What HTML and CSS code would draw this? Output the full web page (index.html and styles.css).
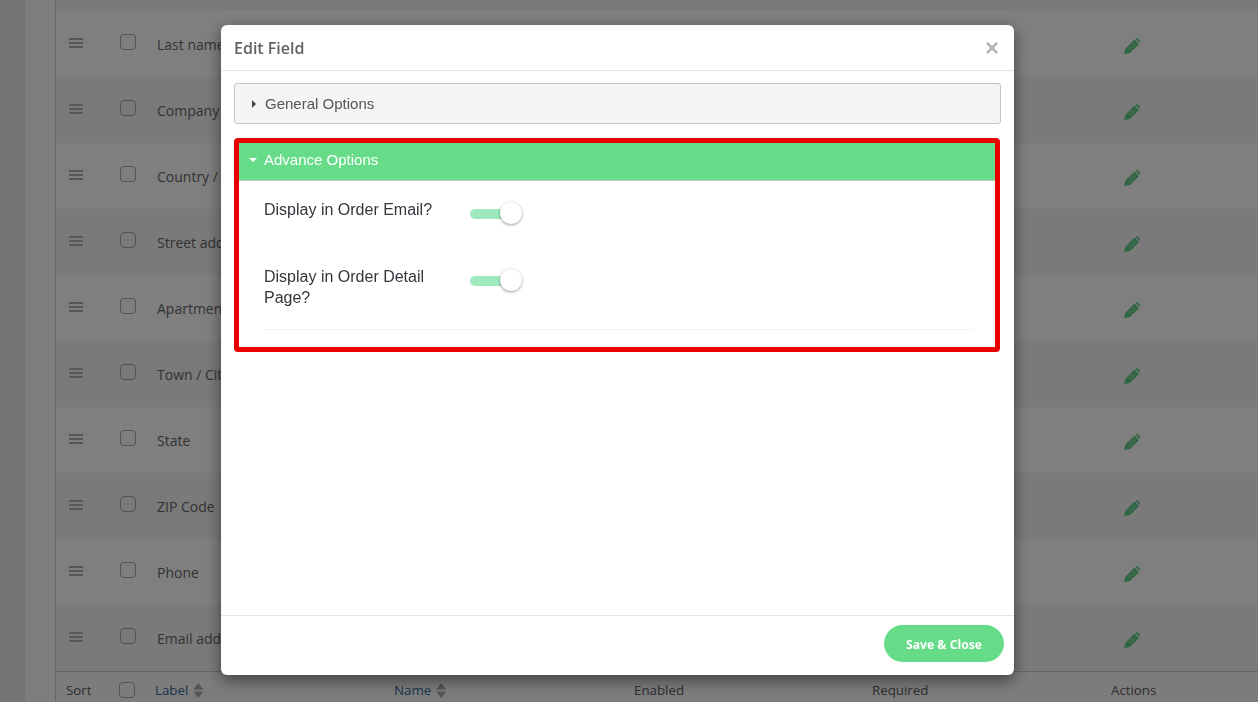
FILE: index.html
```html
<!DOCTYPE html>
<html lang="en">
<head>
<meta charset="utf-8">
<title>Edit Field</title>
<link rel="stylesheet" href="styles.css">
</head>
<body>
<svg class="defs" width="0" height="0" aria-hidden="true">
  <symbol id="pencil" viewBox="0 0 16 16">
    <path d="M0 16 1.500 10.500 10.500 1.500 15 6 6 15ZM11.500.8 12.300.3Q13 0 13.700.3L15.800 2.400Q16.200 3.100 15.700 3.800L15.800 5.200Z" fill="#5ccb85"/>
    <path d="M4 10.500 10.500 4.200M5.700 12.200 12 5.800" stroke="#a8dcbc" stroke-width="1" fill="none"/>
  </symbol>
  <symbol id="bars" viewBox="0 0 14 10">
    <path d="M0 0h14v2H0zM0 4h14v2H0zM0 8h14v2H0z" fill="#b0b0b0"/>
  </symbol>
</svg>

<div class="page">
  <div class="rail"></div>
  <div class="side"></div>
  <main class="main">
    <div class="top-gap"></div>
    <div class="row odd"><svg class="bars"><use href="#bars"/></svg><span class="check"></span><span class="label">Last name</span><svg class="pencil"><use href="#pencil"/></svg></div>
    <div class="row"><svg class="bars"><use href="#bars"/></svg><span class="check"></span><span class="label">Company name</span><svg class="pencil"><use href="#pencil"/></svg></div>
    <div class="row odd"><svg class="bars"><use href="#bars"/></svg><span class="check"></span><span class="label">Country / Region</span><svg class="pencil"><use href="#pencil"/></svg></div>
    <div class="row"><svg class="bars"><use href="#bars"/></svg><span class="check"></span><span class="label">Street address</span><svg class="pencil"><use href="#pencil"/></svg></div>
    <div class="row odd"><svg class="bars"><use href="#bars"/></svg><span class="check"></span><span class="label">Apartment</span><svg class="pencil"><use href="#pencil"/></svg></div>
    <div class="row"><svg class="bars"><use href="#bars"/></svg><span class="check"></span><span class="label">Town / City</span><svg class="pencil"><use href="#pencil"/></svg></div>
    <div class="row odd"><svg class="bars"><use href="#bars"/></svg><span class="check"></span><span class="label">State</span><svg class="pencil"><use href="#pencil"/></svg></div>
    <div class="row"><svg class="bars"><use href="#bars"/></svg><span class="check"></span><span class="label">ZIP Code</span><svg class="pencil"><use href="#pencil"/></svg></div>
    <div class="row odd"><svg class="bars"><use href="#bars"/></svg><span class="check"></span><span class="label">Phone</span><svg class="pencil"><use href="#pencil"/></svg></div>
    <div class="row"><svg class="bars"><use href="#bars"/></svg><span class="check"></span><span class="label">Email address</span><svg class="pencil"><use href="#pencil"/></svg></div>
    <div class="foot">
      <span class="foot-sort">Sort</span>
      <span class="check foot-check"></span>
      <span class="foot-label"><a class="sort-link">Label</a><span class="sort-arrows"></span></span>
      <span class="foot-name"><a class="sort-link">Name</a><span class="sort-arrows"></span></span>
      <span class="foot-enabled">Enabled</span>
      <span class="foot-required">Required</span>
      <span class="foot-actions">Actions</span>
    </div>
  </main>
</div>

<div class="overlay"></div>

<section class="modal">
  <header class="modal-head">
    <h2 class="modal-title">Edit Field</h2>
    <span class="modal-close">&#215;</span>
  </header>
  <div class="modal-body">
    <div class="acc-closed"><span class="caret-right"></span>General Options</div>
    <div class="advance">
      <div class="acc-open"><span class="caret-down"></span>Advance Options</div>
      <div class="advance-body">
        <div class="opt">
          <span class="opt-label">Display in Order Email?</span>
          <span class="toggle"><span class="knob"></span></span>
        </div>
        <div class="opt">
          <span class="opt-label">Display in Order Detail Page?</span>
          <span class="toggle"><span class="knob"></span></span>
        </div>
        <div class="divider"></div>
      </div>
    </div>
  </div>
  <footer class="modal-foot">
    <button class="save">Save &amp; Close</button>
  </footer>
</section>
</body>
</html>
```
FILE: styles.css
```css
* { box-sizing: border-box; }
html, body { margin: 0; height: 702px; overflow: hidden; }
body { font-family: "Open Sans", "Noto Sans", sans-serif; color: #666; background: #f1f1f1; }
.defs { display: block; height: 0; }

.page { display: flex; height: 702px; }
.rail { width: 25px; background: #ebebeb; }
.side { width: 31px; background: #fafafa; border-right: 1px solid #ccc; }
.main { flex: 1; display: flex; flex-direction: column; background: #fff; }
.top-gap { height: 11px; background: #f2f2f2; }

.row { height: 66px; display: flex; align-items: center; background: #f5f5f5; position: relative; }
.row.odd { background: #fff; }
.bars { width: 14px; height: 10px; margin-left: 13px; flex: none; margin-top: -2px; }
.check {
  width: 16px; height: 16px; margin-left: 37px; flex: none; margin-top: -4px;
  border: 1px solid #a8a8a8; border-radius: 4px;
}
.label { margin-left: 21px; font-size: 14px; color: #666; white-space: nowrap; }
.pencil { width: 16px; height: 16px; position: absolute; left: 1068px; top: 27px; }

.foot {
  height: 31px; border-top: 1px solid #ccc; display: grid; align-items: start;
  grid-template-columns: 53px 36px 239px 240px 238px 239px 1fr;
  padding: 8px 0 0 10px; font-size: 13.300px; line-height: 20px; color: #5a5a5a; background: #f9f9f9;
}
.foot-check { margin: 2px 0 0; }
.sort-link { color: #33699c; }
.sort-arrows {
  display: inline-block; width: 10px; height: 15px; margin-left: 5px; vertical-align: -3px;
  background: #aaa;
  clip-path: polygon(50% 0, 100% 43%, 0 43%, 0 57%, 100% 57%, 50% 100%, 0 57%, 0 43%);
}

.overlay { position: fixed; inset: 0; background: rgba(0, 0, 0, .5); }

.modal {
  position: fixed; left: 221px; top: 25px; width: 793px; height: 650px;
  background: #fff; border-radius: 6px; display: flex; flex-direction: column;
  box-shadow: 0 5px 15px rgba(0, 0, 0, .5);
}
.modal-head {
  height: 46px; flex: none; display: flex; align-items: center; justify-content: space-between;
  padding: 0 15px 0 13px; border-bottom: 1px solid #e5e5e5;
}
.modal-title { margin: 0; font-size: 16px; font-weight: 600; color: #5f6368; }
.modal-close { font-family: "Liberation Sans", sans-serif; font-size: 24px; font-weight: 700; line-height: 1; color: #b5b5b5; }

.modal-body { flex: 1; padding: 12px 13px 0 13px; }
.acc-closed {
  height: 41px; display: flex; align-items: center; padding-left: 17px;
  background: #f5f5f5; border: 1px solid #c5c5c5; border-radius: 3px;
  font-family: "Liberation Sans", sans-serif; font-size: 15px; color: #555;
}
.caret-right {
  width: 0; height: 0; margin-right: 9px; border-left: 4px solid #454545;
  border-top: 4px solid transparent; border-bottom: 4px solid transparent;
}
.advance {
  margin-top: 14px; width: 766px; height: 214px; border: 5px solid #e80000; border-radius: 4px;
}
.acc-open {
  height: 38px; display: flex; align-items: center; padding: 0 0 4px 10px;
  background: #66dc88; border-bottom: 1px solid #c5c5c5;
  font-family: "Liberation Sans", sans-serif; font-size: 15px; color: #fff;
}
.caret-down {
  width: 0; height: 0; margin-right: 7px; border-top: 4px solid #fff;
  border-left: 4px solid transparent; border-right: 4px solid transparent;
}
.advance-body { padding: 18px 22px 0 25px; }
.opt { display: flex; align-items: flex-start; min-height: 42px; margin-bottom: 25px; }
.opt-label {
  width: 206px; font-family: "Liberation Sans", sans-serif; font-size: 16px; line-height: 21px; color: #32373c;
}
.toggle {
  width: 41px; height: 10px; margin-top: 10px; border-radius: 5px; background: #9fe9be; position: relative;
}
.knob {
  position: absolute; left: 30px; top: -7px; width: 22px; height: 22px; border-radius: 50%;
  background: #fff; box-shadow: 0 1px 3px rgba(0, 0, 0, .4);
}
.divider { border-top: 1px solid #f0f0f0; margin-top: -4px; }

.modal-foot {
  height: 60px; flex: none; border-top: 1px solid #e5e5e5;
  display: flex; justify-content: flex-end; align-items: flex-start; padding: 9px 10px 0 0;
}
.save {
  width: 120px; height: 37px; padding: 2px 0 0; border: 0; border-radius: 19px; background: #66dc88; color: #fff;
  font-family: "Open Sans", sans-serif; font-size: 12.200px; font-weight: 700;
}
```
